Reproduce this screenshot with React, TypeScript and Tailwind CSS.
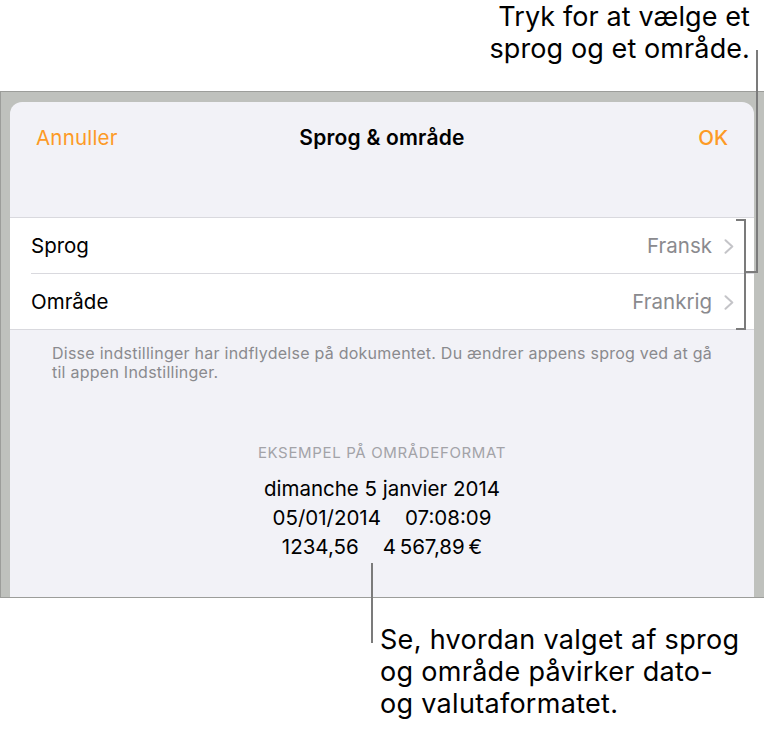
const rows = [
  { label: "Sprog", value: "Fransk" },
  { label: "Område", value: "Frankrig" },
];

function Chevron() {
  return (
    <svg width="10" height="15" viewBox="0 0 10 15" className="ml-[12px]" fill="none">
      <path d="M1.5 1.2 L8.3 7.5 L1.5 13.8" stroke="#c4c4c8" strokeWidth="2" strokeLinecap="round" strokeLinejoin="round" />
    </svg>
  );
}

export default function App() {
  return (
    <div className="relative w-[764px] h-[737px] bg-white overflow-hidden font-['Inter',sans-serif] text-black">
      {/* callout above */}
      <div className="h-[91px] pt-[1px] pr-[14px] text-right text-[27px] leading-[32px] tracking-[0.1px]">
        <p>Tryk for at vælge et</p>
        <p>sprog og et område.</p>
      </div>

      {/* device frame */}
      <div className="h-[507px] bg-[#bfc1bd] border-t border-b border-l border-[#9c9d9a] pl-[9px] pr-[10px] pt-[10px]">
        <div className="h-full bg-[#f2f2f7] rounded-t-[12px] flex flex-col">
          <header className="h-[72px] grid grid-cols-[1fr_auto_1fr] items-center px-[26px] text-[20.5px]">
            <button className="justify-self-start text-[#fd9a26] tracking-[0.2px]">Annuller</button>
            <span className="font-semibold text-[21px] tracking-[0.2px]">Sprog &amp; område</span>
            <button className="justify-self-end text-[#fd9a26] font-medium">OK</button>
          </header>

          <div className="mt-[43px] bg-white border-t border-b border-[#d9d9de]">
            {rows.map((r, i) => (
              <div key={r.label}>
                {i > 0 && <div className="ml-[21px] h-px bg-[#d9d9de]" />}
                <div className="h-[55px] flex items-center pl-[21px] pr-[20px] pt-[2px] text-[20.5px]">
                  <span className="flex-1">{r.label}</span>
                  <span className="text-[#8a8a8e]">{r.value}</span>
                  <Chevron />
                </div>
              </div>
            ))}
          </div>

          <p className="mt-[14px] pl-[42px] pr-[30px] text-[16px] leading-[19px] tracking-[0.25px] text-[#8a8a8e]">
            Disse indstillinger har indflydelse på dokumentet. Du ændrer appens sprog ved at gå til appen Indstillinger.
          </p>

          <div className="mt-[62px] flex flex-col items-center">
            <p className="text-[15px] leading-[18px] tracking-[0.65px] text-[#a3a3a8] uppercase">Eksempel på områdeformat</p>
            <div className="mt-[12px] text-[20.5px] leading-[29px] text-center">
              <p>dimanche 5 janvier 2014</p>
              <p>
                05/01/2014<span className="inline-block w-[24px]" />07:08:09
              </p>
              <p>
                1234,56<span className="inline-block w-[24px]" />4{"\u2009"}567,89{"\u2009"}€
              </p>
            </div>
          </div>
        </div>
      </div>

      {/* callout below */}
      <div className="pl-[380px] pt-[26px] text-[27px] leading-[32px] tracking-[0.3px]">
        <p>Se, hvordan valget af sprog</p>
        <p>og område påvirker dato-</p>
        <p>og valutaformatet.</p>
      </div>

      {/* leader lines */}
      <div className="absolute left-[756px] top-[50px] w-[2px] h-[223px] bg-[#7b7b7b]" />
      <div className="absolute left-[745px] top-[271px] w-[13px] h-[2px] bg-[#7b7b7b]" />
      <div className="absolute left-[736px] top-[219px] w-[10px] h-[111px] border-t-2 border-b-2 border-r-2 border-[#7b7b7b]" />
      <div className="absolute left-[371px] top-[563px] w-[2px] h-[80px] bg-[#7b7b7b]" />
    </div>
  );
}
